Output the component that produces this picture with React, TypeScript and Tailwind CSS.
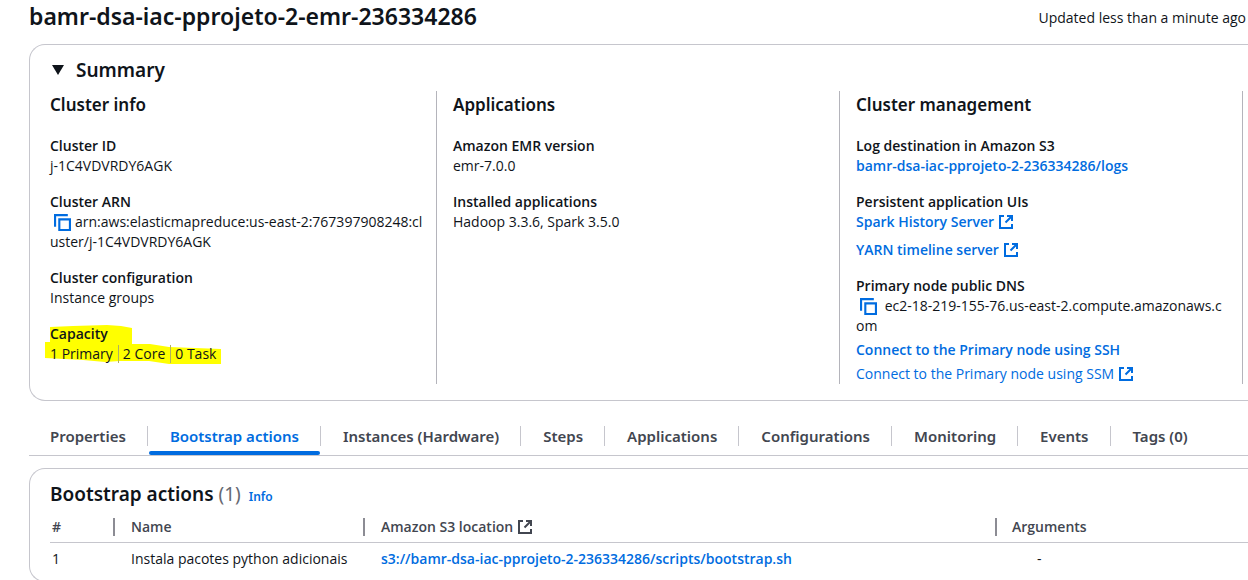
import type { ReactNode } from "react";

function ExternalIcon() {
  return (
    <svg viewBox="0 0 16 16" className="ml-1 inline-block size-4 align-[-3px]" fill="none" stroke="currentColor" strokeWidth="2" aria-hidden="true">
      <path d="M6 2H2v12h12v-4" />
      <path d="M9 2h5v5M14 2L7.500 8.500" />
    </svg>
  );
}

function CopyButton({ label }: { label: string }) {
  return (
    <button type="button" aria-label={label} className="mr-1 ml-1 inline-block cursor-pointer align-[-4px] text-[#006ce0]">
      <svg viewBox="0 0 16 16" className="block size-[17px]" fill="none" stroke="currentColor" strokeWidth="2" aria-hidden="true">
        <path d="M1 12V1h12" />
        <path d="M5 5h10v10H5z" />
      </svg>
    </button>
  );
}

function Column({ title, children }: { title: string; children: ReactNode }) {
  return (
    <section className="min-w-0 border-r border-[#b4b4bb] pr-3">
      <h3 className="mb-[17px] font-['Noto_Sans',sans-serif] text-[17px] leading-7 font-semibold">{title}</h3>
      <dl className="flex flex-col gap-4">{children}</dl>
    </section>
  );
}

function Field({ label, children }: { label: string; children: ReactNode }) {
  return (
    <div>
      <dt className="font-semibold">{label}</dt>
      <dd className="break-all">{children}</dd>
    </div>
  );
}

function Link({ children, light }: { children: ReactNode; light?: boolean }) {
  return (
    <a href="#" className={light ? "text-[#006ce0]" : "font-semibold text-[#006ce0]"}>
      {children}
    </a>
  );
}

const tabs = [
  "Properties",
  "Bootstrap actions",
  "Instances (Hardware)",
  "Steps",
  "Applications",
  "Configurations",
  "Monitoring",
  "Events",
  "Tags (0)",
];

export default function App() {
  return (
    <main className="max-h-screen overflow-hidden bg-white pl-[29px] font-['Open_Sans',sans-serif] text-[14px] leading-5 text-[#0f141a]">
      <header className="flex h-11 items-start justify-between pr-0.5">
        <h1 className="font-['Noto_Sans',sans-serif] text-[23px] leading-8 font-semibold">bamr-dsa-iac-pprojeto-2-emr-236334286</h1>
        <p className="pt-2">Updated less than a minute ago</p>
      </header>

      <section className="rounded-l-2xl border border-r-0 border-[#c6c6cd] pt-3 pr-[5px] pb-4 pl-5">
        <h2 className="mb-2 font-['Noto_Sans',sans-serif] text-[19px] leading-[26px] font-semibold">
          <button type="button" aria-expanded="true" className="flex cursor-pointer items-center gap-3">
            <svg viewBox="0 0 14 10" className="h-[10px] w-[14px]" fill="currentColor" aria-hidden="true">
              <path d="M2 0h12L8 10z" />
            </svg>
            Summary
          </button>
        </h2>
        <div className="grid grid-cols-3 gap-4">
          <Column title="Cluster info">
            <Field label="Cluster ID">j-1C4VDVRDY6AGK</Field>
            <Field label="Cluster ARN">
              <CopyButton label="Copy cluster ARN" />
              arn:aws:elasticmapreduce:us-east-2:767397908248:cluster/j-1C4VDVRDY6AGK
            </Field>
            <Field label="Cluster configuration">Instance groups</Field>
            <div className="relative">
              <svg viewBox="0 0 178 42" className="absolute top-0 -left-[5px] h-[42px] w-[178px]" fill="#ffff00" aria-hidden="true">
                <path d="M5 3L28 2L62 1L76 2L87 4V20L105 20L124 23L176 25V40L124 40L104 37L75 37L60 38L38 36L0 34V18L5 18z" />
              </svg>
              <dl className="relative">
                <dt className="font-semibold">Capacity</dt>
                <dd className="flex items-center">
                  <span className="mr-1 border-r border-[#b0b060] pr-[5px] leading-[18px]">1 Primary</span>
                  <span className="mr-1 border-r border-[#b0b060] pr-[5px] leading-[18px]">2 Core</span>
                  <span>0 Task</span>
                </dd>
              </dl>
            </div>
          </Column>
          <Column title="Applications">
            <Field label="Amazon EMR version">emr-7.0.0</Field>
            <Field label="Installed applications">Hadoop 3.3.6, Spark 3.5.0</Field>
          </Column>
          <Column title="Cluster management">
            <Field label="Log destination in Amazon S3">
              <Link>bamr-dsa-iac-pprojeto-2-236334286/logs</Link>
            </Field>
            <Field label="Persistent application UIs">
              <span className="flex flex-col gap-2">
                <Link>Spark History Server<ExternalIcon /></Link>
                <Link>YARN timeline server<ExternalIcon /></Link>
              </span>
            </Field>
            <Field label="Primary node public DNS">
              <CopyButton label="Copy public DNS" /> ec2-18-219-155-76.us-east-2.compute.amazonaws.com
              <span className="mt-1 flex flex-col gap-1">
                <Link>Connect to the Primary node using SSH</Link>
                <Link light>Connect to the Primary node using SSM<ExternalIcon /></Link>
              </span>
            </Field>
          </Column>
        </div>
      </section>

      <nav aria-label="Cluster details" className="mt-[23px] flex h-8 border-b border-[#c6c6cd] font-['Noto_Sans',sans-serif] text-[15px] font-semibold whitespace-nowrap text-[#424650]">
        {tabs.map((tab, i) => (
          <div key={tab} className="flex">
            <button
              type="button"
              className={
                tab === "Bootstrap actions"
                  ? "relative cursor-pointer px-[21px] pb-2 text-[#006ce0] after:absolute after:inset-x-0 after:bottom-0 after:h-1 after:rounded-full after:bg-[#006ce0]"
                  : "cursor-pointer px-[21px] pb-2"
              }
            >
              {tab}
            </button>
            {i < tabs.length - 1 && <span className="mt-0.5 mr-px h-5 w-px bg-[#c6c6cd]" />}
          </div>
        ))}
      </nav>

      <section className="mt-3 rounded-l-2xl border border-r-0 border-[#c6c6cd] pt-3 pb-1.5 pl-5">
        <div className="flex items-baseline font-['Noto_Sans',sans-serif] leading-[26px]">
          <h2 className="text-[19px] font-semibold">
            Bootstrap actions <span className="font-normal text-[#656871]">(1)</span>
          </h2>
          <a href="#" className="ml-2 text-[12px] font-semibold text-[#006ce0]">Info</a>
        </div>
        <table className="w-full table-fixed text-left">
          <thead className="text-[#424650]">
            <tr className="h-8 border-b border-[#c6c6cd]">
              <th className="w-[65px] p-0 pt-0.5 font-semibold"><div className="border-r-2 border-[#8c8c94] pl-0.5 leading-[18px]">#</div></th>
              <th className="w-[250px] p-0 pt-0.5 font-semibold"><div className="border-r-2 border-[#8c8c94] pl-4 leading-[18px]">Name</div></th>
              <th className="p-0 pt-0.5 font-semibold"><div className="border-r-2 border-[#8c8c94] pl-4 leading-[18px]">Amazon S3 location<ExternalIcon /></div></th>
              <th className="w-[251px] p-0 pt-0.5 pl-[15px] font-semibold">Arguments</th>
            </tr>
          </thead>
          <tbody>
            <tr className="h-[33px]">
              <td className="p-0 pl-0.5">1</td>
              <td className="p-0 pl-4">Instala pacotes python adicionais</td>
              <td className="p-0 pl-4"><Link>s3://bamr-dsa-iac-pprojeto-2-236334286/scripts/bootstrap.sh</Link></td>
              <td className="p-0 pl-10">-</td>
            </tr>
          </tbody>
        </table>
      </section>
    </main>
  );
}
